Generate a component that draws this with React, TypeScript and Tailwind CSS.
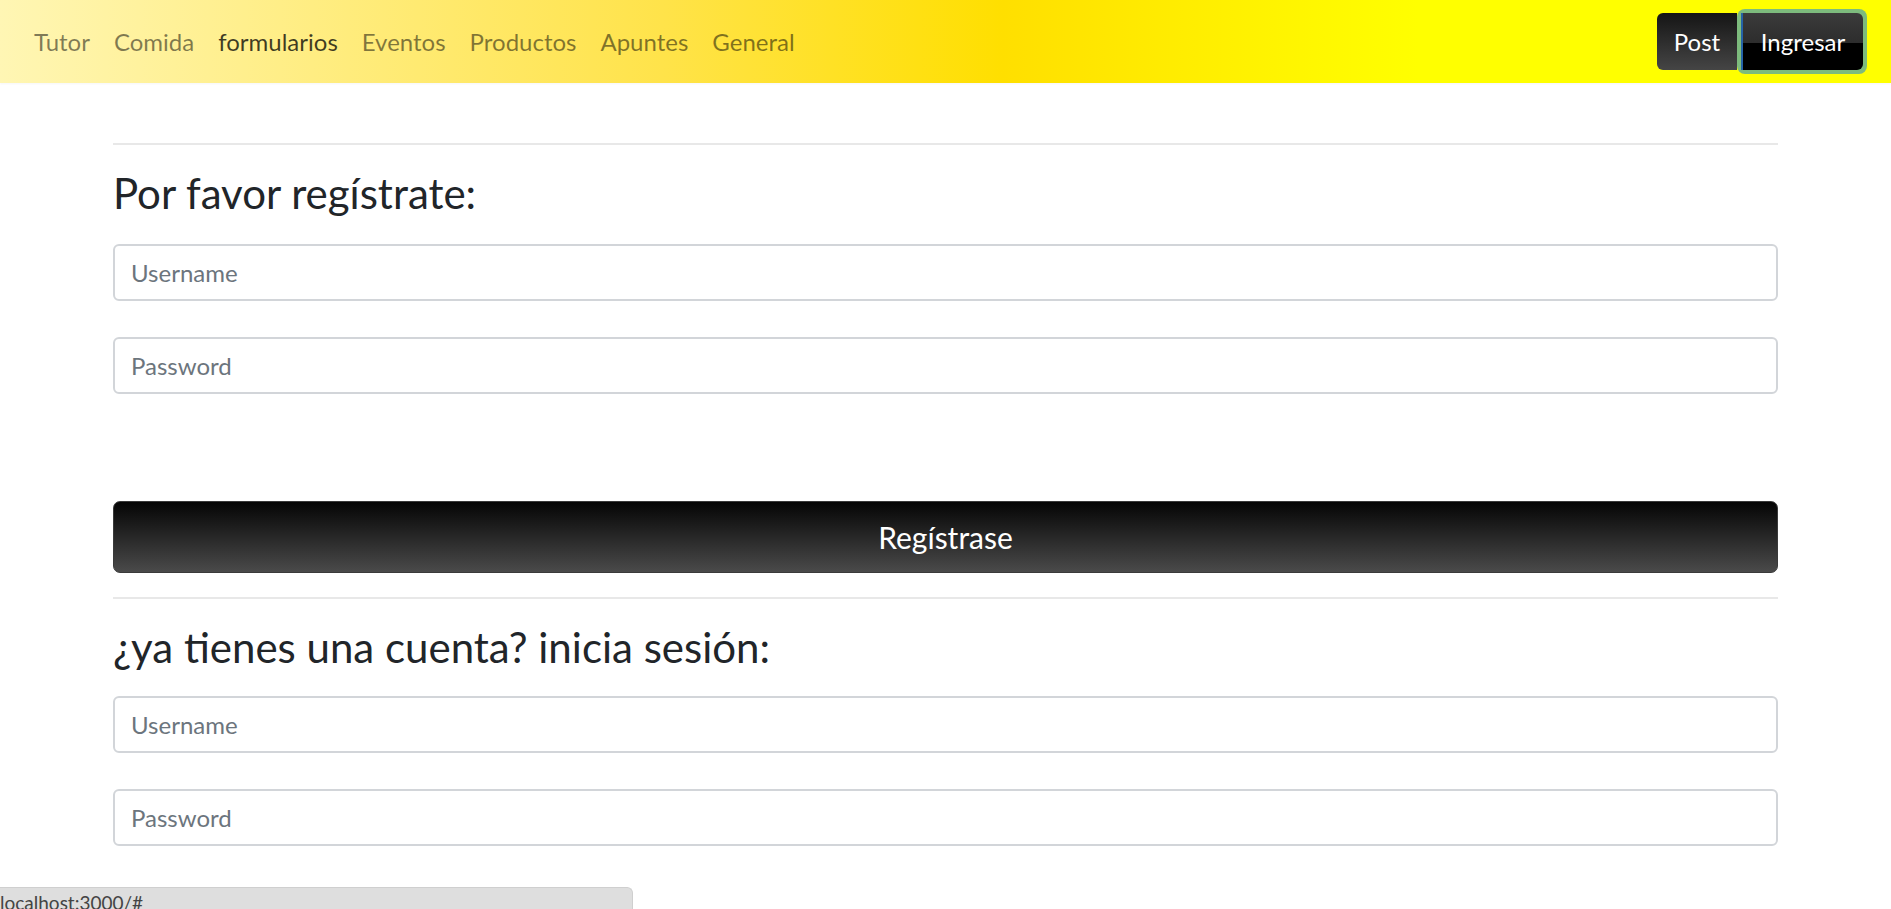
import React from "react";

const font = { fontFamily: "Lato, 'Noto Sans', sans-serif" };

function Field({ placeholder, type = "text" }: { placeholder: string; type?: string }) {
  return (
    <input
      type={type}
      placeholder={placeholder}
      className="block w-full h-[57px] rounded-[6px] border-2 border-[#d2d5d9] bg-white px-[16px] text-[24px] text-[#495057] placeholder:text-[#6c757d] outline-none"
    />
  );
}

export default function App() {
  const links = ["Tutor", "Comida", "formularios", "Eventos", "Productos", "Apuntes", "General"];
  return (
    <div className="relative min-h-[909px] bg-white text-[#212529]" style={font}>
      <nav className="flex h-[83px] items-center justify-between bg-[linear-gradient(to_right,#fff6b4_0%,#ffe34a_35%,#ffdf00_53%,#ffff00_75%,#ffff00_100%)] pl-[22px] pr-[24px] shadow-[0_1px_2px_rgba(0,0,0,0.04)]">
        <div className="flex items-center">
          {links.map((l) => (
            <a
              key={l}
              href="#"
              className={
                "px-[12px] text-[24px] leading-[36px] " +
                (l === "formularios" ? "text-black/75" : "text-black/50")
              }
            >
              {l}
            </a>
          ))}
        </div>
        <div className="flex items-center">
          <button className="h-[57px] w-[80px] rounded-l-[6px] bg-[linear-gradient(to_bottom,#151515,#454545)] text-[24px] text-white">
            Post
          </button>
          <div className="rounded-[8px] bg-[#7dbb7d] p-[4px] -my-[4px]">
            <button className="h-[57px] w-[122px] rounded-r-[6px] border-l-2 border-[#2563a6] bg-[linear-gradient(to_bottom,#3b3b3b_0%,#2d2d2d_52%,#000000_52%,#000000_100%)] text-[24px] text-white">
              Ingresar
            </button>
          </div>
        </div>
      </nav>

      <main className="mx-auto w-[1665px]">
        <div className="mt-[60px] h-[2px] bg-[#e8e8e8]" />
        <h3 className="mt-[23px] mb-[26px] text-[42px] leading-[50px] font-normal">Por favor regístrate:</h3>
        <Field placeholder="Username" />
        <div className="h-[36px]" />
        <Field placeholder="Password" type="password" />
        <button className="mt-[107px] block h-[72px] w-full rounded-[7px] border border-[#3a3a3a] bg-[linear-gradient(to_bottom,#050505,#4a4a4a)] text-[30px] text-white">
          Regístrase
        </button>
        <div className="mt-[24px] h-[2px] bg-[#e8e8e8]" />
        <h3 className="mt-[23px] mb-[24px] text-[42px] leading-[50px] font-normal">¿ya tienes una cuenta? inicia sesión:</h3>
        <Field placeholder="Username" />
        <div className="h-[36px]" />
        <Field placeholder="Password" type="password" />
      </main>

      <div className="fixed bottom-0 left-0 h-[22px] w-[633px] overflow-hidden rounded-tr-[6px] border-t border-r border-[#cfcfcf] bg-[#dedede] pl-0 pt-[4px] text-[19px] leading-[22px] text-[#444]" style={font}>
        localhost:3000/#
      </div>
    </div>
  );
}
